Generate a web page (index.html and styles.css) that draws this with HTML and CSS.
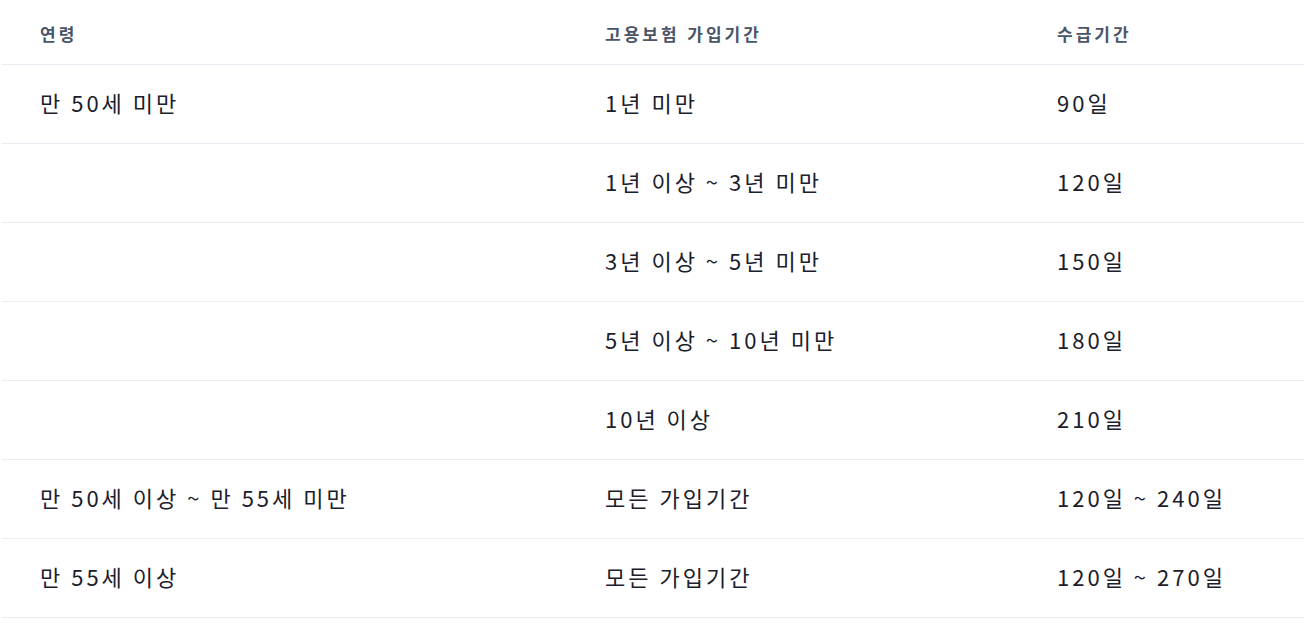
FILE: index.html
```html
<!DOCTYPE html>
<html lang="ko">
<head>
<meta charset="utf-8">
<link rel="stylesheet" href="styles.css">
</head>
<body>
<table class="benefit-table">
  <thead>
    <tr>
      <th class="col-age">연령</th>
      <th class="col-period">고용보험 가입기간</th>
      <th class="col-days">수급기간</th>
    </tr>
  </thead>
  <tbody>
    <tr><td>만 50세 미만</td><td>1년 미만</td><td>90일</td></tr>
    <tr><td></td><td>1년 이상 ~ 3년 미만</td><td>120일</td></tr>
    <tr><td></td><td>3년 이상 ~ 5년 미만</td><td>150일</td></tr>
    <tr><td></td><td>5년 이상 ~ 10년 미만</td><td>180일</td></tr>
    <tr><td></td><td>10년 이상</td><td>210일</td></tr>
    <tr><td>만 50세 이상 ~ 만 55세 미만</td><td>모든 가입기간</td><td>120일 ~ 240일</td></tr>
    <tr><td>만 55세 이상</td><td>모든 가입기간</td><td>120일 ~ 270일</td></tr>
  </tbody>
</table>
</body>
</html>
```

FILE: styles.css
```css
html, body {
  margin: 0;
  padding: 0;
  background: #ffffff;
}
body {
  padding-left: 2px;
  font-family: "Noto Sans CJK KR", "Noto Sans", sans-serif;
}
.benefit-table {
  width: 1302px;
  border-collapse: collapse;
  table-layout: fixed;
}
.col-age { width: 565px; }
.col-period { width: 452px; }
.col-days { width: auto; }
.benefit-table th {
  height: 64px;
  padding: 4px 0 0 38px;
  text-align: left;
  font-size: 17px;
  font-weight: 700;
  letter-spacing: 3px;
  color: #4a5568;
  border-bottom: 1px solid #e8edf3;
  box-sizing: border-box;
}
.benefit-table td {
  height: 79px;
  padding: 0 0 3px 38px;
  font-size: 22px;
  letter-spacing: 3px;
  word-spacing: -1.2px;
  color: #1a202c;
  border-bottom: 1px solid #e8edf3;
  box-sizing: border-box;
  white-space: nowrap;
}
```
